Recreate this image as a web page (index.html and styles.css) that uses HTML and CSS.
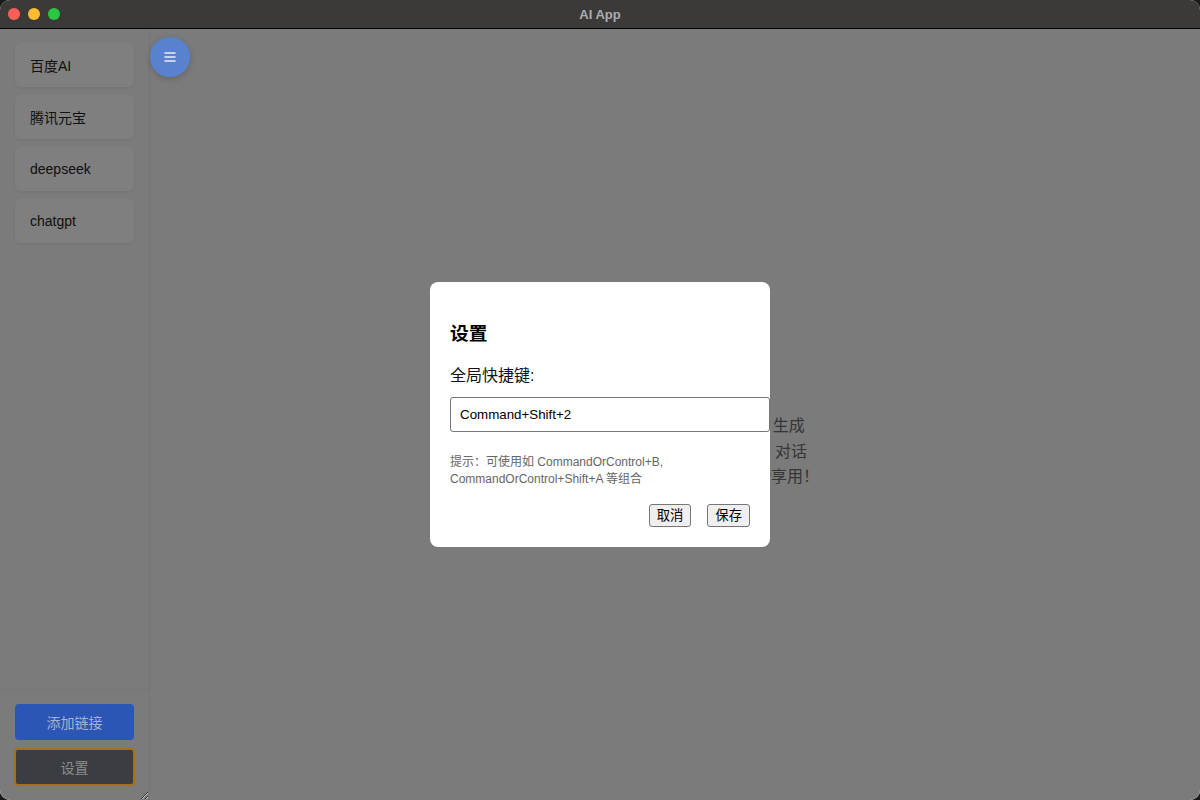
FILE: index.html
```html
<!DOCTYPE html>
<html lang="zh-CN">
<head>
<meta charset="utf-8">
<title>AI App</title>
<link rel="stylesheet" href="styles.css">
</head>
<body>
<div class="window">
  <header class="titlebar">
    <div class="lights">
      <span class="light red"></span>
      <span class="light yellow"></span>
      <span class="light green"></span>
    </div>
    <div class="title">AI App</div>
    <div></div>
  </header>
  <div class="app">
    <aside class="sidebar">
      <nav class="links">
        <div class="link">百度AI</div>
        <div class="link">腾讯元宝</div>
        <div class="link">deepseek</div>
        <div class="link">chatgpt</div>
      </nav>
      <div class="sidebar-footer">
        <button class="btn-add">添加链接</button>
        <button class="btn-settings">设置</button>
      </div>
    </aside>
    <main class="main">
      <button class="menu-toggle" aria-label="菜单">
        <svg width="12" height="12" viewBox="0 0 12 12"><rect x="0.5" y="1" width="11" height="2" fill="#c7d1ea"/><rect x="0.5" y="5" width="11" height="2" fill="#c7d1ea"/><rect x="0.5" y="9" width="11" height="2" fill="#c7d1ea"/></svg>
      </button>
      <div class="welcome">
        <h2 class="welcome-title">欢迎使用</h2>
        <p class="welcome-text">选择 AI平台，支持问答、写作、生成<br>支持多种平台切换，随时继续 AI 对话<br>简洁高效的使用体验，等你来尽情享用！</p>
      </div>
    </main>
    <div class="backdrop">
      <div class="modal">
        <h3 class="modal-title">设置</h3>
        <label class="field-label" for="hotkey">全局快捷键:</label>
        <input id="hotkey" class="field-input" type="text" value="Command+Shift+2">
        <p class="hint">提示：可使用如 CommandOrControl+B,<br>CommandOrControl+Shift+A 等组合</p>
        <div class="actions">
          <button class="btn">取消</button>
          <button class="btn">保存</button>
        </div>
      </div>
    </div>
  </div>
</div>
</body>
</html>
```
FILE: styles.css
```css
html, body {
  margin: 0;
  padding: 0;
  background: #1b1b1b;
}

body {
  font-family: "Liberation Sans", "Noto Sans CJK SC", sans-serif;
}

.window {
  width: 1200px;
  height: 800px;
  border-radius: 10px;
  overflow: hidden;
  background: #f6f6f6;
  display: flex;
  flex-direction: column;
}

.titlebar {
  height: 28px;
  flex: none;
  background: #3c3a38;
  border-bottom: 1px solid #000;
  display: grid;
  grid-template-columns: 1fr auto 1fr;
  align-items: center;
}

.lights {
  display: flex;
  gap: 8px;
  padding-left: 8px;
}

.light {
  width: 12px;
  height: 12px;
  border-radius: 50%;
  display: block;
}

.red { background: #fe5f57; }
.yellow { background: #febc2e; }
.green { background: #28c840; }

.title {
  font-size: 13px;
  font-weight: bold;
  color: #adadad;
}

.app {
  position: relative;
  flex: 1;
  display: flex;
  min-height: 0;
}

.sidebar {
  width: 150px;
  flex: none;
  box-sizing: border-box;
  background: #f6f6f6;
  border-right: 1px solid #ececec;
  display: flex;
  flex-direction: column;
  resize: horizontal;
  overflow: hidden;
}

.links {
  flex: 1;
  padding: 14px 15px 0;
  display: flex;
  flex-direction: column;
  gap: 8px;
}

.link {
  height: 44px;
  box-sizing: border-box;
  padding: 0 15px;
  display: flex;
  align-items: center;
  background: #fff;
  border-radius: 6px;
  box-shadow: 0 1px 3px rgba(0, 0, 0, 0.08);
  font-size: 14px;
  color: #222;
}

.sidebar-footer {
  border-top: 1px solid #ececec;
  padding: 14px 14px 14px;
  display: flex;
  flex-direction: column;
  gap: 8px;
}

.btn-add,
.btn-settings {
  position: relative;
  z-index: 20;
  border-radius: 4px;
  font-family: inherit;
  font-size: 14px;
  cursor: pointer;
}

.btn-add {
  height: 36px;
  margin: 0 1px;
  background: #2c56b5;
  color: #a6b1cf;
  border: none;
}

.btn-settings {
  height: 38px;
  background: #3a3d41;
  color: #8d8d8d;
  border: 2px solid #a27118;
}

.main {
  position: relative;
  flex: 1;
  background: #f6f6f6;
  display: flex;
  align-items: center;
  justify-content: center;
}

.menu-toggle {
  position: absolute;
  left: 0;
  top: 8px;
  z-index: 20;
  width: 40px;
  height: 40px;
  border-radius: 50%;
  border: none;
  padding: 0;
  background: #5882cf;
  box-shadow: 0 2px 6px rgba(0, 0, 0, 0.18);
  display: flex;
  align-items: center;
  justify-content: center;
}

.welcome {
  text-align: center;
}

.welcome-title {
  margin: 0 0 34px;
  font-size: 28px;
  line-height: 40px;
  color: #333;
}

.welcome-text {
  margin: 0;
  font-size: 16px;
  line-height: 25.6px;
  color: #6a6a6a;
}

.backdrop {
  position: absolute;
  inset: 0;
  z-index: 10;
  background: rgba(0, 0, 0, 0.5);
  display: flex;
  align-items: center;
  justify-content: center;
}

.modal {
  width: 300px;
  padding: 20px;
  background: #fff;
  border-radius: 8px;
  display: flex;
  flex-direction: column;
  align-items: flex-start;
}

.modal-title {
  margin: 20px 0 0;
  font-size: 18.72px;
  line-height: 24px;
  font-weight: bold;
  color: #000;
}

.field-label {
  margin-top: 18px;
  font-size: 16px;
  line-height: 24px;
  color: #111;
}

.field-input {
  margin-top: 9px;
  width: 100%;
  box-sizing: content-box;
  padding: 9px;
  border: 1px solid #767676;
  border-radius: 3px;
  font-family: inherit;
  font-size: 13.33px;
  line-height: 15px;
  color: #000;
  outline: none;
}

.hint {
  margin: 22px 0 0;
  font-size: 12px;
  line-height: 17px;
  color: #666;
}

.actions {
  margin-top: 16px;
  align-self: stretch;
  display: flex;
  justify-content: flex-end;
  gap: 16px;
}

.btn {
  padding: 2px 7px;
  font-family: inherit;
  font-size: 13.33px;
  line-height: 17px;
  background: #efefef;
  border: 1px solid #767676;
  border-radius: 3px;
  color: #000;
}
```
